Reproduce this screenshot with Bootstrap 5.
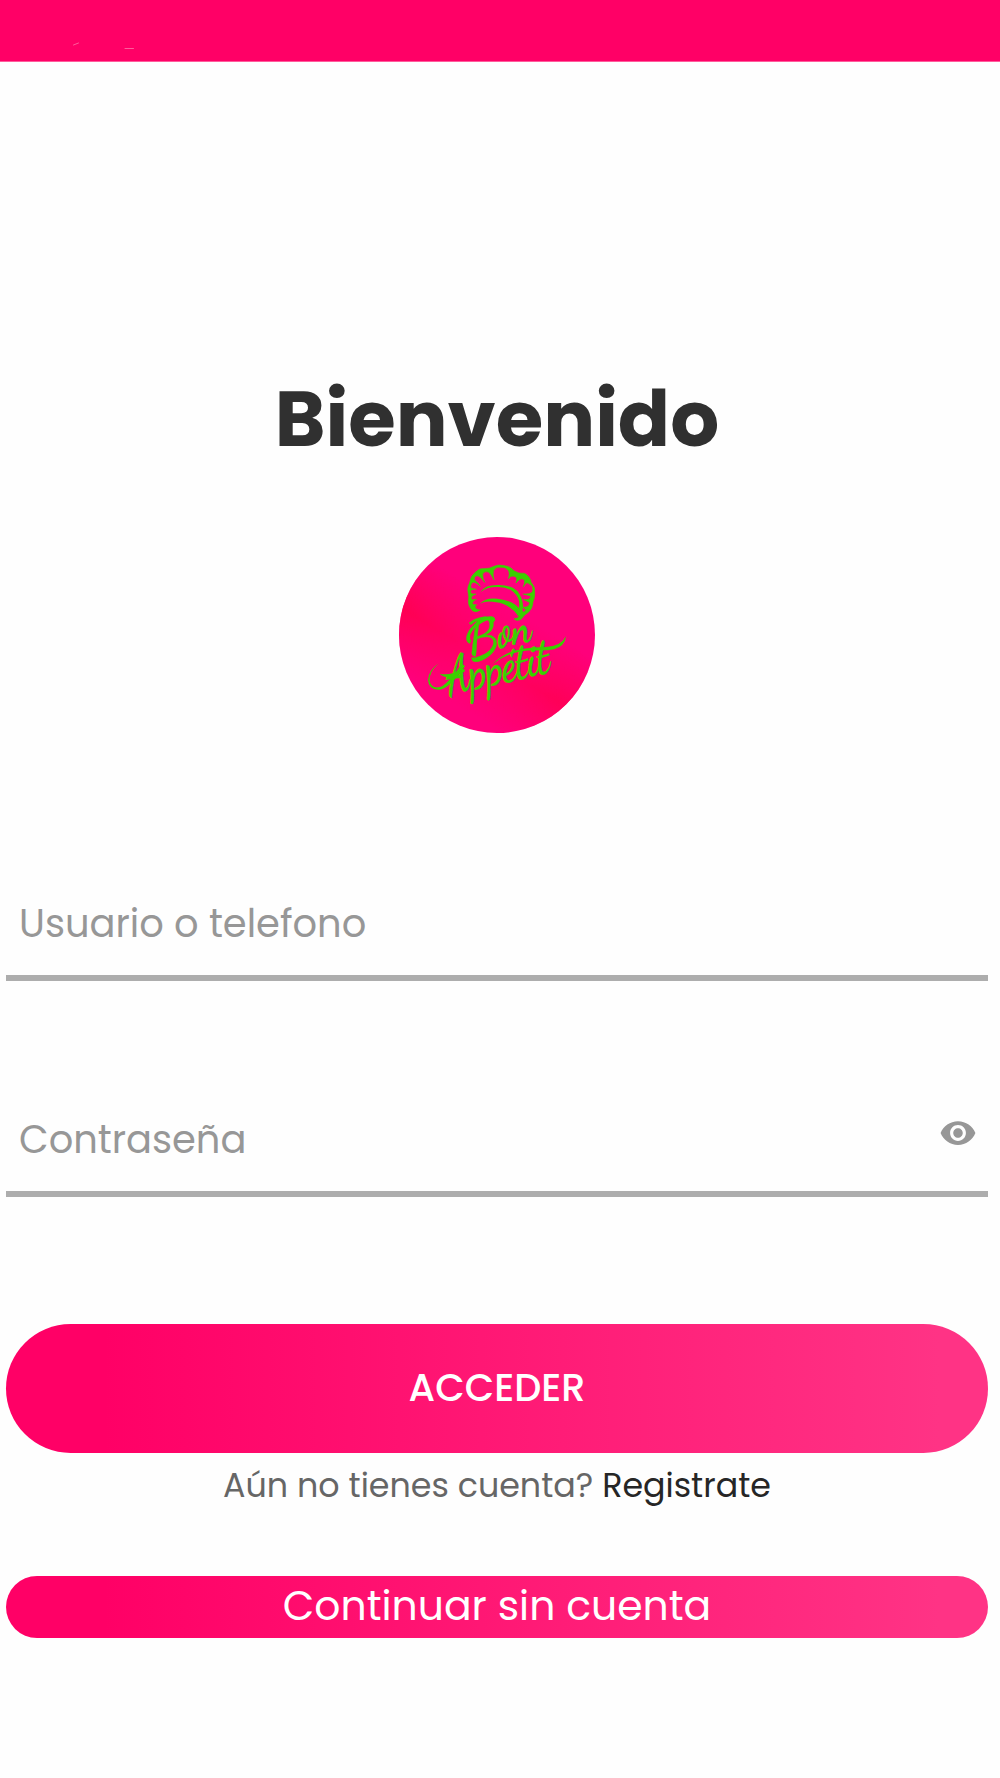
<!DOCTYPE html>
<html lang="es">
<head>
  <meta charset="UTF-8" />
  <meta name="viewport" content="width=device-width, initial-scale=1.0" />
  <title>Bienvenido</title>
  <link href="https://cdn.jsdelivr.net/npm/bootstrap@5.3.0/dist/css/bootstrap.min.css" rel="stylesheet" />
  <style>
    body {
      background-color: #fefefe;
      font-family: Poppins, Inter, "Liberation Sans", sans-serif;
      min-height: 1778px;
    }
    .top-bar {
      height: 62px;
      background-color: #ff0066;
      border-bottom: 1px solid #ff5c9c;
    }
    .login-wrap {
      padding: 312px 12px 0 6px;
    }
    .welcome {
      height: 90px;
      line-height: 90px;
      font-size: 77px;
      font-weight: 700;
      color: #303030;
      margin-bottom: 73px;
    }
    .logo {
      width: 196px;
      height: 196px;
      margin-bottom: 143px;
    }
    .field {
      height: 105px;
      border-bottom: 6px solid #adadad;
      padding: 0 11px 4px 13px;
    }
    .field-pass {
      margin-top: 111px;
      margin-bottom: 127px;
    }
    .field .form-control {
      font-size: 38.4px;
      font-weight: 400;
      line-height: 60px;
    }
    .field .form-control::placeholder {
      color: #979797;
      opacity: 1;
    }
    .eye {
      width: 38px;
      height: 38px;
      margin-bottom: 13px;
    }
    .btn-pink {
      color: #fff;
      background: linear-gradient(90deg, #ff0066 10%, #ff3385 95%);
    }
    .btn-login {
      height: 129px;
      padding: 0 0 2px;
      font-size: 38.2px;
      font-weight: 500;
    }
    .register {
      height: 60px;
      line-height: 60px;
      margin: 3px 0 60px;
      font-size: 33.3px;
      color: #666;
    }
    .register a {
      color: #262626;
    }
    .btn-guest {
      height: 62px;
      line-height: 58px;
      padding: 0 0 2px;
      font-size: 40.9px;
    }
  </style>
</head>
<body>
  <header class="top-bar">
    <svg class="d-block" width="200" height="61" fill="none" stroke="#ff5c9c" stroke-linecap="round">
      <path d="M73.5 45l5-2" />
      <path d="M125 48.500h8.500" />
    </svg>
  </header>

  <main class="login-wrap d-flex flex-column">
    <h1 class="welcome text-center"><span>Bienvenido</span></h1>

    <svg class="logo align-self-center" viewBox="28 21 588 588">
      <defs>
        <linearGradient id="logoBand" gradientUnits="userSpaceOnUse" x1="360" y1="235" x2="190" y2="520">
          <stop offset="0" stop-color="#ff0052" stop-opacity="0" />
          <stop offset="0.5" stop-color="#ff0052" />
          <stop offset="1" stop-color="#ff0052" stop-opacity="0" />
        </linearGradient>
        <linearGradient id="logoFade" gradientUnits="userSpaceOnUse" x1="40" y1="240" x2="490" y2="520">
          <stop offset="0" stop-color="#fff" />
          <stop offset="0.5" stop-color="#fff" stop-opacity="0.4" />
          <stop offset="1" stop-color="#fff" stop-opacity="0.85" />
        </linearGradient>
        <mask id="logoMask" maskUnits="userSpaceOnUse" x="28" y="21" width="588" height="588">
          <rect x="28" y="21" width="588" height="588" fill="url(#logoFade)" />
        </mask>
      </defs>
      <circle cx="322" cy="315" r="294" fill="#ff007b" />
      <circle cx="322" cy="315" r="294" fill="url(#logoBand)" mask="url(#logoMask)" />
      <!-- chef hat -->
      <g fill="#3bd000">
        <path stroke="#3bd000" stroke-width="2" d="M271 240Q262 248 250 243Q236 232 236 211Q239 203 236 191Q231 174 240 158Q243 137 257 127Q269 113 286 116Q300 116 310 110Q325 102 345 107Q362 109 374 123Q386 132 404 130Q422 140 424 157Q438 171 435 190Q436 202 430 215Q429 236 416 247Q407 253 401 259Q396 272 380 271L373 266Q388 267 391 252L393 240Q404 253 409 239L398 231Q416 235 421 218L401 208Q421 213 424 198L401 192Q424 194 429 184Q432 166 420 163Q411 151 401 170Q409 152 401 148Q392 142 379 159Q386 141 374 139Q364 135 356 146Q363 126 353 118Q346 111 336 112Q321 108 312 121Q308 134 313 150Q304 130 296 126Q286 122 279 131Q278 144 285 157Q272 138 263 137Q251 139 255 151Q265 158 272 169Q256 153 247 158Q241 166 244 175L260 178Q242 176 242 186Q244 194 259 192Q246 195 244 205Q246 212 260 208Q249 212 248 220Q250 226 261 224Q252 230 259 236Q264 240 271 240Z" />
        <path d="M272 187Q286 164 326 165Q382 164 396 206Q405 229 394 260L382 255Q394 223 385 204Q370 173 326 171Q293 169 272 187Z" />
        <path d="M271 221Q288 202 323 206Q371 211 392 239L388 260Q359 221 319 217Q289 211 271 221Z" />
      </g>
      <g fill="#3bd000" stroke="#3bd000" stroke-width="1" font-family="'Dancing Script', 'Liberation Serif', cursive" font-weight="700">
        <text transform="translate(240 386) rotate(-13) skewX(-4)" font-size="158" textLength="92" lengthAdjust="spacingAndGlyphs">B</text>
        <text transform="translate(328 352) rotate(-12) skewX(-4)" font-size="166" textLength="102" lengthAdjust="spacingAndGlyphs">on</text>
        <text transform="translate(178 492) rotate(-14) skewX(-2)" font-size="156" textLength="72" lengthAdjust="spacingAndGlyphs">A</text>
        <text transform="translate(246 477) rotate(-13) skewX(-2)" font-size="158" textLength="244" lengthAdjust="spacingAndGlyphs">ppétit</text>
      </g>
      <!-- swashes -->
      <g fill="#3bd000">
        <path d="M147 400Q116 428 120 454Q126 477 151 471Q174 463 216 401L226 408Q181 475 150 479Q117 481 115 450Q117 421 147 400Z" />
        <path d="M150 431Q178 439 223 416L226 424Q177 457 150 431Z" />
        <path d="M310 401Q348 363 402 356Q431 351 468 351Q513 350 529 319Q526 349 493 358Q468 363 434 361Q362 361 310 401Z" />
        <path d="M240 341Q219 330 241 296Q274 258 303 259Q316 260 317 270L311 278Q302 256 256 293Q234 315 244 334Z" />
      </g>
    </svg>

    <form class="d-flex flex-column">
      <div class="field d-flex align-items-center">
        <input type="text" id="user" class="form-control border-0 bg-transparent shadow-none p-0" placeholder="Usuario o telefono" />
      </div>
      <div class="field field-pass d-flex align-items-center">
        <input type="password" id="pass" class="form-control border-0 bg-transparent shadow-none p-0" placeholder="Contraseña" />
        <svg class="eye flex-shrink-0" viewBox="0 0 24 24" fill="#979797">
          <path d="M12 4.500C7 4.500 2.730 7.610 1 12c1.730 4.390 6 7.500 11 7.500s9.270-3.110 11-7.500c-1.730-4.390-6-7.500-11-7.500zM12 17c-2.760 0-5-2.240-5-5s2.240-5 5-5 5 2.240 5 5-2.240 5-5 5zm0-8c-1.660 0-3 1.340-3 3s1.340 3 3 3 3-1.340 3-3-1.340-3-3-3z" />
        </svg>
      </div>

      <button type="submit" class="btn btn-pink btn-login rounded-pill border-0 w-100"><span>ACCEDER</span></button>
      <p class="register text-center"><span>Aún no tienes cuenta?</span> <a href="#" class="text-decoration-none">Registrate</a></p>
      <button type="button" class="btn btn-pink btn-guest rounded-pill border-0 w-100"><span>Continuar sin cuenta</span></button>
    </form>
  </main>

  <script src="https://cdn.jsdelivr.net/npm/bootstrap@5.3.0/dist/js/bootstrap.bundle.min.js"></script>
</body>
</html>
